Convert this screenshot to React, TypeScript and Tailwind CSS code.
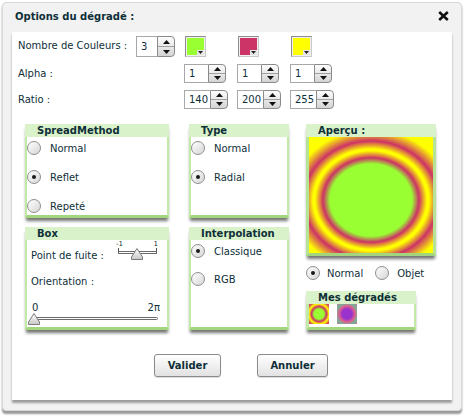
import type { ReactNode } from 'react'

function Spinner({ value, inputClass, tall }: { value: string; inputClass: string; tall?: boolean }) {
  return (
    <div className={tall ? 'flex h-[21px]' : 'flex h-[19px]'}>
      <div className={`${inputClass} h-full bg-white border border-[#a8a8a8] border-r-0 pl-[4px] flex items-center`}>{value}</div>
      <div className="w-[18px] h-full rounded-r-[4px] border border-[#8a8a8a] bg-linear-to-b from-[#fdfdfd] to-[#d4d4d4] flex flex-col">
        <div className="flex-1 flex items-center justify-center border-b border-[#a0a0a0]">
          <svg width="7" height="4" viewBox="0 0 7 4"><polygon points="0,4 3.5,0 7,4" fill="#111" /></svg>
        </div>
        <div className="flex-1 flex items-center justify-center">
          <svg width="7" height="4" viewBox="0 0 7 4"><polygon points="0,0 7,0 3.5,4" fill="#111" /></svg>
        </div>
      </div>
    </div>
  )
}

function Swatch({ color }: { color: string }) {
  return (
    <div className="relative w-[21px] h-[21px] border border-[#8c8c8c] border-r-[#c8c8c8] border-b-[#c8c8c8] p-[1px] bg-[#f0f0f0]">
      <div className={`w-full h-full ${color}`} />
      <div className="absolute right-[1px] bottom-[1px] w-[7px] h-[5px] bg-[#e6e6e6] flex items-center justify-center">
        <svg width="5" height="3" viewBox="0 0 5 3"><polygon points="0,0 5,0 2.5,3" fill="#222" /></svg>
      </div>
    </div>
  )
}

function Radio({ checked }: { checked?: boolean }) {
  return (
    <div className="w-[14px] h-[14px] shrink-0 rounded-full border border-[#8e8e8e] bg-linear-to-br from-white to-[#d6d6d6] flex items-center justify-center">
      {checked && <div className="w-[4px] h-[4px] rounded-full bg-[#1a1a1a]" />}
    </div>
  )
}

function Panel({ title, children, bodyClass }: { title: string; children: ReactNode; bodyClass: string }) {
  return (
    <div className="shadow-[0_4px_3px_-1px_rgba(0,0,0,0.55)]">
      <div className="h-[13px] bg-[#d9f2c9] pl-[12px] font-bold leading-[13px]">{title}</div>
      <div className={`bg-white border-b-[3px] border-b-[#a3d47e] ${bodyClass}`}>{children}</div>
    </div>
  )
}

function Thumb() {
  return (
    <svg width="12" height="12" viewBox="0 0 12 12">
      <defs>
        <linearGradient id="tg" x1="0" y1="0" x2="0" y2="1">
          <stop offset="0" stopColor="#ffffff" />
          <stop offset="1" stopColor="#c8c8c8" />
        </linearGradient>
      </defs>
      <polygon points="6,0.5 11.5,9 11.5,11.5 0.5,11.5 0.5,9" fill="url(#tg)" stroke="#7a7a7a" strokeWidth="1" />
    </svg>
  )
}

export default function App() {
  const swatches = ['bg-[#99ff33]', 'bg-[#cc3366]', 'bg-[#ffff00]']

  return (
    <div className="w-[464px] h-[417px] bg-white pt-[2px] pl-[2px] font-['DejaVu_Sans',sans-serif] text-[10px] text-[#0e2f38]">
      <div className="w-[460px] h-[409px] bg-[#f2f2f2] border border-[#d8d8d8] rounded-[4px] shadow-[0_3px_2px_rgba(0,0,0,0.4)]">
        {/* Title bar */}
        <div className="h-[29px] flex items-center justify-between pl-[12px] pr-[12px] pb-[3px]">
          <span className="font-bold text-[10px]">Options du dégradé :</span>
          <svg width="11" height="10" viewBox="0 0 11 10">
            <path d="M1.2 1 L9.8 9 M9.8 1 L1.2 9" stroke="#111" strokeWidth="2.6" />
          </svg>
        </div>

        <div className="ml-[9px] w-[440px] h-[368px] bg-white shadow-[0_3px_2px_rgba(0,0,0,0.35)]">
          {/* Colour rows */}
          <div className="pt-[4px]">
            <div className="flex h-[21px] items-center">
              <div className="w-[172px] flex items-center">
                <span className="w-[124px] pl-[6px] mb-[2px]">Nombre de Couleurs :</span>
                <Spinner value="3" inputClass="w-[21px]" tall />
              </div>
              {swatches.map(c => (
                <div key={c} className="w-[53px] pl-[1px]">
                  <Swatch color={c} />
                </div>
              ))}
            </div>

            <div className="flex h-[19px] items-center mt-[7px]">
              <span className="w-[172px] pl-[6px]">Alpha :</span>
              {['1', '1', '1'].map((v, i) => (
                <div key={i} className="w-[53px]">
                  <Spinner value={v} inputClass="w-[24px]" />
                </div>
              ))}
            </div>

            <div className="flex h-[19px] items-center mt-[7px]">
              <span className="w-[172px] pl-[6px]">Ratio :</span>
              {['140', '200', '255'].map(v => (
                <div key={v} className="w-[53px]">
                  <Spinner value={v} inputClass="w-[26px]" />
                </div>
              ))}
            </div>
          </div>

          {/* Panels */}
          <div className="mt-[15px] pl-[13px] flex items-start">
            <div className="w-[144px] mr-[20px]">
              <Panel title="SpreadMethod" bodyClass="h-[81px] border-x-2 border-x-[#c2eaa6] pt-[4px]">
                <div className="flex flex-col gap-[15px]">
                  <div className="flex items-center h-[14px] gap-[9px]"><Radio /><span>Normal</span></div>
                  <div className="flex items-center h-[14px] gap-[9px]"><Radio checked /><span>Reflet</span></div>
                  <div className="flex items-center h-[14px] gap-[9px]"><Radio /><span>Repeté</span></div>
                </div>
              </Panel>
              <div className="mt-[9px]">
                <Panel title="Box" bodyClass="h-[90px] border-x-2 border-x-[#c2eaa6]">
                  <div className="flex items-start h-[30px] pl-[4px]">
                    <span className="mt-[10px] leading-[12px]">Point de fuite :</span>
                    <div className="relative ml-auto mr-[7px] w-[44px] h-[20px]">
                      <span className="absolute left-0 top-[0px] text-[7px] leading-[8px]">-1</span>
                      <span className="absolute right-[2px] top-[0px] text-[7px] leading-[8px]">1</span>
                      <div className="absolute left-[2px] top-[8px] w-[1px] h-[5px] bg-[#555]" />
                      <div className="absolute left-[40px] top-[8px] w-[1px] h-[5px] bg-[#555]" />
                      <div className="absolute left-[2px] top-[11px] w-[39px] h-[3px] border border-[#6a6a6a] bg-white" />
                      <div className="absolute left-[15px] top-[8px]"><Thumb /></div>
                    </div>
                  </div>
                  <div className="pl-[4px] mt-[6px] leading-[12px]">Orientation :</div>
                  <div className="flex justify-between pl-[5px] pr-[7px] mt-[14px] leading-[12px]">
                    <span>0</span>
                    <span>2π</span>
                  </div>
                  <div className="relative h-[12px] mt-[-1px]">
                    <div className="absolute left-[5px] top-[4px] w-[126px] h-[3px] border border-[#6a6a6a] bg-white rounded-full" />
                    <div className="absolute left-[1px] top-0"><Thumb /></div>
                  </div>
                </Panel>
              </div>
            </div>

            <div className="w-[100px] mr-[17px]">
              <Panel title="Type" bodyClass="h-[81px] border-x-2 border-x-[#c2eaa6] pt-[4px]">
                <div className="flex flex-col gap-[15px]">
                  <div className="flex items-center h-[14px] gap-[9px]"><Radio /><span>Normal</span></div>
                  <div className="flex items-center h-[14px] gap-[9px]"><Radio checked /><span>Radial</span></div>
                </div>
              </Panel>
              <div className="mt-[9px]">
                <Panel title="Interpolation" bodyClass="h-[90px] border-x-2 border-x-[#c2eaa6] pt-[4px]">
                  <div className="flex flex-col gap-[14px]">
                    <div className="flex items-center h-[14px] gap-[9px]"><Radio checked /><span>Classique</span></div>
                    <div className="flex items-center h-[14px] gap-[9px]"><Radio /><span>RGB</span></div>
                  </div>
                </Panel>
              </div>
            </div>

            <div className="w-[130px]">
              <Panel title="Aperçu :" bodyClass="border-x-[3px] border-x-[#b6e496] border-b-[2px]">
                <div className="w-[124px] h-[116px] bg-[radial-gradient(ellipse_100px_88px_at_62px_63px,#99ff33_0px,#99ff33_41px,#cc3366_48px,#ffff00_56px,#ffff00_58px,#cc3366_67px,#ffff00_80px)]" />
              </Panel>
              <div className="flex items-center h-[14px] mt-[10px]">
                <Radio checked />
                <span className="ml-[7px]">Normal</span>
                <div className="ml-[12px]"><Radio /></div>
                <span className="ml-[8px]">Objet</span>
              </div>
              <div className="mt-[11px] w-[110px]">
                <Panel title="Mes dégradés" bodyClass="h-[26px] border-l-[3px] border-r-2 border-x-[#c2eaa6]">
                  <div className="flex gap-[8px]">
                    <div className="w-[20px] h-[20px] bg-[radial-gradient(circle,#99ff33_0px,#99ff33_5px,#cc3366_7.5px,#ffff00_10px,#cc3366_13px,#ffff00_16px)]" />
                    <div className="w-[20px] h-[20px] bg-[radial-gradient(circle,#9933cc_0px,#9933cc_5px,#e0608c_8px,#6fb59a_11px,#e0608c_15px)]" />
                  </div>
                </Panel>
              </div>
            </div>
          </div>

          {/* Buttons */}
          <div className="mt-[24px] pl-[142px] flex gap-[36px]">
            <button className="w-[67px] h-[23px] rounded-[3px] border border-[#8a8a8a] bg-linear-to-b from-white to-[#e2e2e2] font-bold text-[10px] text-[#0e2f38] shadow-[0_1px_1px_rgba(0,0,0,0.15)]">
              Valider
            </button>
            <button className="w-[71px] h-[23px] rounded-[3px] border border-[#8a8a8a] bg-linear-to-b from-white to-[#e2e2e2] font-bold text-[10px] text-[#0e2f38] shadow-[0_1px_1px_rgba(0,0,0,0.15)]">
              Annuler
            </button>
          </div>
        </div>
      </div>
    </div>
  )
}
